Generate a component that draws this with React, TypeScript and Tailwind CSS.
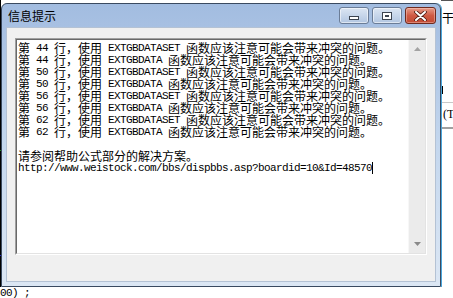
import React from "react"

const lines = [
  "第 44 行，使用 EXTGBDATASET 函数应该注意可能会带来冲突的问题。",
  "第 44 行，使用 EXTGBDATA 函数应该注意可能会带来冲突的问题。",
  "第 50 行，使用 EXTGBDATASET 函数应该注意可能会带来冲突的问题。",
  "第 50 行，使用 EXTGBDATA 函数应该注意可能会带来冲突的问题。",
  "第 56 行，使用 EXTGBDATASET 函数应该注意可能会带来冲突的问题。",
  "第 56 行，使用 EXTGBDATA 函数应该注意可能会带来冲突的问题。",
  "第 62 行，使用 EXTGBDATASET 函数应该注意可能会带来冲突的问题。",
  "第 62 行，使用 EXTGBDATA 函数应该注意可能会带来冲突的问题。",
  "",
  "请参阅帮助公式部分的解决方案。"
]

const url = "http://www.weistock.com/bbs/dispbbs.asp?boardid=10&Id=48570"

// ascii runs at half width (6px), cjk at full width (12px), like SimSun 12
const Mixed: React.FC<{ text: string }> = ({ text }) => {
  const runs = text.match(/[\x00-\x7f]+|[^\x00-\x7f]+/g) || []
  return (
    <>
      {runs.map((r, i) =>
        /^[\x00-\x7f]/.test(r) ? (
          <span
            key={i}
            className="inline-block h-[12px] leading-[12px] align-top font-['Liberation_Mono',monospace] text-[11px] tracking-[-0.6px]">
            {r}
          </span>
        ) : (
          <span
            key={i}
            className="inline-block h-[12px] leading-[12px] align-top font-['Noto_Sans_CJK_SC',sans-serif] text-[12px]">
            {r}
          </span>
        )
      )}
    </>
  )
}

const Arrow: React.FC<{ up?: boolean }> = ({ up }) => (
  <svg width="7" height="4" viewBox="0 0 7 4">
    {up ? (
      <polygon points="3.5,0 7,4 0,4" fill="#a3a3a3" />
    ) : (
      <polygon points="0,0 7,0 3.5,4" fill="#8a8a8a" />
    )}
  </svg>
)

export default function App() {
  return (
    <div className="relative w-[453px] h-[298px] bg-white overflow-hidden">
      {/* application behind the dialog */}
      <div className="absolute left-0 top-0 w-px h-[287px] bg-black" />
      <div className="absolute left-0 top-[62px] w-[3px] h-px bg-black" />
      <div className="absolute left-0 top-[110px] w-[3px] h-px bg-black" />
      <div className="absolute left-0 top-[150px] w-[3px] h-px bg-[#1a8a1a]" />
      <div className="absolute left-0 top-[200px] w-[3px] h-px bg-black" />
      <div className="absolute left-0 top-[255px] w-[3px] h-px bg-[#2020c0]" />
      <div className="absolute left-[441px] top-0 w-[12px] h-px bg-[#555]" />
      <div className="absolute left-[442px] top-[11px] whitespace-nowrap font-['Noto_Sans_CJK_SC',sans-serif] text-[12px] leading-[14px] text-black">
        干图
      </div>
      <div className="absolute left-[442px] top-[86px] w-px h-[8px] bg-black" />
      <div className="absolute left-[441px] top-[102px] w-[12px] h-px bg-[#c8c8c8]" />
      <div className="absolute left-[443px] top-[107px] whitespace-nowrap font-['Liberation_Serif',serif] text-[12px] leading-[14px] text-black">
        (T
      </div>
      <div className="absolute left-[441px] top-[127px] w-[12px] h-[2px] bg-[#a0a0a0]" />
      <div className="absolute left-0 top-[287px] whitespace-pre font-['Liberation_Mono',monospace] text-[11px] tracking-[-0.6px] leading-[12px] text-black">
        00) ;
      </div>

      {/* dialog window */}
      <div className="absolute left-[1px] top-[3px] w-[440px] h-[284px] rounded-t-[6px] border border-[#3a4a60] bg-gradient-to-b from-[#a2bce0] via-[#c4d7ee] to-[#dce7f4] flex flex-col px-[4px] pb-[4px] shadow-[1px_0_0_#49a6dc]">
        <div className="h-[23px] flex items-start justify-between">
          <div className="pl-[2px] pt-[5px] font-['Noto_Sans_CJK_SC',sans-serif] text-[12px] leading-[14px] text-black">
            信息提示
          </div>
          <div className="flex gap-[3px] pt-[3px]">
            <div className="w-[30px] h-[17px] rounded-[3px] border border-[#6b7d97] bg-gradient-to-b from-[#dce6f3] to-[#b2c6e1] shadow-[inset_0_0_0_1px_rgba(255,255,255,0.55)] flex items-end justify-center pb-[3px]">
              <div className="w-[10px] h-[4px] bg-white border border-[#3c4450]" />
            </div>
            <div className="w-[30px] h-[17px] rounded-[3px] border border-[#6b7d97] bg-gradient-to-b from-[#dce6f3] to-[#b2c6e1] shadow-[inset_0_0_0_1px_rgba(255,255,255,0.55)] flex items-center justify-center">
              <div className="w-[10px] h-[8px] bg-white border border-[#3c4450] flex items-center justify-center">
                <div className="w-[4px] h-[2px] border border-[#3c4450] bg-[#b8c8dc]" />
              </div>
            </div>
            <div className="w-[31px] h-[17px] rounded-[3px] border border-[#6e2a1e] bg-gradient-to-b from-[#e59a88] via-[#cf5a44] to-[#c24a33] shadow-[inset_0_0_0_1px_rgba(255,220,210,0.4)] flex items-center justify-center">
              <svg width="13" height="10" viewBox="0 0 13 10">
                <path
                  d="M2 1 L11 9 M11 1 L2 9"
                  stroke="#4a1a12"
                  strokeWidth="3.6"
                  fill="none"
                  strokeLinecap="round"
                />
                <path
                  d="M2 1 L11 9 M11 1 L2 9"
                  stroke="#ffffff"
                  strokeWidth="2"
                  fill="none"
                  strokeLinecap="round"
                />
              </svg>
            </div>
          </div>
        </div>

        <div className="flex-1 bg-[#f0f0f0] border border-[#b4c2d4] pt-[10px] pl-[8px] pr-[8px] pb-[26px] flex">
          <div className="flex-1 flex border-t border-l border-[#a0a0a0] border-r border-b border-r-white border-b-white">
            <div className="flex-1 flex border-t border-l border-[#696969] border-r border-b border-r-[#e3e3e3] border-b-[#e3e3e3]">
              <div className="flex-1 bg-white pl-[1px] pt-[2px] text-black">
                {lines.map((l, i) => (
                  <div key={i} className="h-[12px] leading-[12px] whitespace-pre">
                    <Mixed text={l} />
                  </div>
                ))}
                <div className="h-[12px] leading-[12px] whitespace-pre">
                  <Mixed text={url} />
                  <span className="inline-block w-px h-[12px] bg-black align-top" />
                </div>
              </div>
              <div className="w-[17px] bg-[#ebebeb] border-l border-[#f7f7f7] flex flex-col justify-between items-center py-[7px]">
                <Arrow up />
                <Arrow />
              </div>
            </div>
          </div>
        </div>
      </div>
    </div>
  )
}
